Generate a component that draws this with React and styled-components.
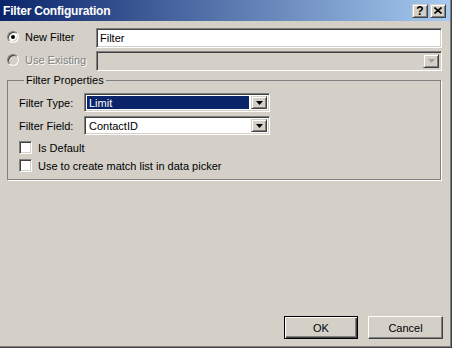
import React from "react";
import styled, { createGlobalStyle, css } from "styled-components";

const GlobalStyle = createGlobalStyle`
    html, body {
        margin: 0;
        padding: 0;
        background: #d4d0c8;
    }
    * {
        box-sizing: border-box;
    }
`;

const sunken = css`
    border: 1px solid;
    border-color: #808080 #ffffff #ffffff #808080;
    box-shadow: inset 1px 1px 0 #404040, inset -1px -1px 0 #d4d0c8;
`;

const raised = css`
    border: 1px solid;
    border-color: #d4d0c8 #404040 #404040 #d4d0c8;
    box-shadow: inset 1px 1px 0 #ffffff, inset -1px -1px 0 #808080;
`;

const Window = styled.div`
    width: 452px;
    height: 348px;
    display: flex;
    flex-direction: column;
    background: #d4d0c8;
    font-family: "Liberation Sans", Arial, sans-serif;
    font-size: 11px;
    color: #000;
    box-shadow: inset -1px -1px 0 #404040, inset -2px -2px 0 #808080;
`;

const TitleBar = styled.div`
    height: 21px;
    margin-right: 2px;
    display: flex;
    align-items: center;
    justify-content: space-between;
    padding: 0 4px 0 3px;
    background: linear-gradient(to right, #0a246a, #a6caf0);
`;

const Title = styled.span`
    color: #fff;
    font-weight: bold;
    font-size: 12px;
    letter-spacing: -0.2px;
`;

const CaptionButtons = styled.div`
    display: flex;
    gap: 2px;
`;

const CaptionButton = styled.div`
    width: 16px;
    height: 14px;
    background: #d4d0c8;
    ${raised};
    display: flex;
    align-items: center;
    justify-content: center;
    font-weight: bold;
    font-size: 12px;
    line-height: 1;
`;

const Body = styled.div`
    flex: 1;
    display: flex;
    flex-direction: column;
    padding: 7px 10px 9px 7px;
`;

const Row = styled.div`
    display: flex;
    align-items: center;
    height: 20px;
    margin-bottom: ${({ $gap }) => $gap || 0}px;
`;

const RadioLabel = styled.label`
    width: 89px;
    display: flex;
    align-items: center;
    gap: 6px;
    color: ${({ $disabled }) => ($disabled ? "#808080" : "#000")};
    text-shadow: ${({ $disabled }) => ($disabled ? "1px 1px 0 #fff" : "none")};
    padding-bottom: 3px;
`;

const Radio = styled.span`
    position: relative;
    width: 12px;
    height: 12px;
    border-radius: 50%;
    border: 1px solid;
    border-color: #808080 #ffffff #ffffff #808080;
    box-shadow: inset 1px 1px 0 #404040, inset -1px -1px 0 #d4d0c8;
    background: ${({ $disabled }) => ($disabled ? "#d4d0c8" : "#fff")};
    flex-shrink: 0;

    ${({ $checked }) =>
        $checked &&
        css`
            &::after {
                content: "";
                position: absolute;
                left: 3px;
                top: 3px;
                width: 4px;
                height: 4px;
                border-radius: 50%;
                background: #000;
            }
        `}
`;

const TextInput = styled.div`
    flex: 1;
    height: 20px;
    background: #fff;
    ${sunken};
    padding: 3px 0 0 3px;
`;

const Combo = styled.div`
    display: flex;
    align-items: stretch;
    height: ${({ $height }) => $height || 19}px;
    width: ${({ $width }) => ($width ? `${$width}px` : "auto")};
    flex: ${({ $width }) => ($width ? "none" : 1)};
    background: ${({ $disabled }) => ($disabled ? "#d4d0c8" : "#fff")};
    ${sunken};
    padding: 2px;
    gap: 2px;
`;

const ComboValue = styled.div`
    flex: 1;
    display: flex;
    align-items: center;
    padding-left: 2px;
    background: ${({ $selected }) => ($selected ? "#0a246a" : "transparent")};
    color: ${({ $selected }) => ($selected ? "#fff" : "#000")};
`;

const DropButton = styled.div`
    width: 16px;
    background: #d4d0c8;
    ${raised};
    display: flex;
    align-items: center;
    justify-content: center;
`;

const Arrow = ({ disabled }) => (
    <svg width="7" height="4" viewBox="0 0 7 4">
        <polygon points="0,0 7,0 3.5,4" fill={disabled ? "#a0a0a0" : "#000"} />
    </svg>
);

const Group = styled.fieldset`
    margin: 3px 1px 0 0;
    padding: 6px 8px 7px 10px;
    border: 1px solid #808080;
    box-shadow: 1px 1px 0 #fff;
    display: flex;
    flex-direction: column;
`;

const Legend = styled.legend`
    margin-left: 6px;
    padding: 0 2px 0 2px;
    line-height: 13px;
`;

const FieldRow = styled.div`
    display: flex;
    align-items: center;
    margin-bottom: 4px;
`;

const FieldLabel = styled.span`
    width: 66px;
    padding-left: 1px;
`;

const CheckRow = styled.label`
    display: flex;
    align-items: center;
    gap: 6px;
    height: 13px;
    margin-top: ${({ $top }) => $top}px;
    padding-left: 1px;
`;

const Checkbox = styled.span`
    width: 13px;
    height: 13px;
    background: #fff;
    ${sunken};
`;

const Footer = styled.div`
    margin-top: auto;
    margin-right: -1px;
    display: flex;
    justify-content: flex-end;
    gap: 10px;
`;

const Button = styled.button`
    width: ${({ $default }) => ($default ? 74 : 75)}px;
    height: 23px;
    font-family: inherit;
    font-size: 11px;
    color: #000;
    background: #d4d0c8;
    padding: 0;
    border: 1px solid;
    border-color: #fff #404040 #404040 #fff;
    box-shadow: inset -1px -1px 0 #808080;

    ${({ $default }) =>
        $default &&
        css`
            border: 1px solid #000;
            box-shadow: inset 1px 1px 0 #fff, inset -1px -1px 0 #404040,
                inset -2px -2px 0 #808080;
        `}
`;

const App = () => {
    return (
        <>
            <GlobalStyle />
            <Window>
                <TitleBar>
                    <Title>Filter Configuration</Title>
                    <CaptionButtons>
                        <CaptionButton>?</CaptionButton>
                        <CaptionButton>
                            <svg width="8" height="7" viewBox="0 0 8 7">
                                <path d="M0.5 0.5 L7.5 6.5 M7.5 0.5 L0.5 6.5" stroke="#000" strokeWidth="1.6" />
                            </svg>
                        </CaptionButton>
                    </CaptionButtons>
                </TitleBar>

                <Body>
                    <Row $gap={3}>
                        <RadioLabel>
                            <Radio $checked />
                            New Filter
                        </RadioLabel>
                        <TextInput>Filter</TextInput>
                    </Row>
                    <Row>
                        <RadioLabel $disabled>
                            <Radio $disabled />
                            Use Existing
                        </RadioLabel>
                        <Combo $disabled $height={20}>
                            <ComboValue />
                            <DropButton>
                                <Arrow disabled />
                            </DropButton>
                        </Combo>
                    </Row>

                    <Group>
                        <Legend>Filter Properties</Legend>
                        <FieldRow>
                            <FieldLabel>Filter Type:</FieldLabel>
                            <Combo $width={186}>
                                <ComboValue $selected>Limit</ComboValue>
                                <DropButton>
                                    <Arrow />
                                </DropButton>
                            </Combo>
                        </FieldRow>
                        <FieldRow>
                            <FieldLabel>Filter Field:</FieldLabel>
                            <Combo $width={186}>
                                <ComboValue>ContactID</ComboValue>
                                <DropButton>
                                    <Arrow />
                                </DropButton>
                            </Combo>
                        </FieldRow>
                        <CheckRow $top={2}>
                            <Checkbox />
                            Is Default
                        </CheckRow>
                        <CheckRow $top={5}>
                            <Checkbox />
                            Use to create match list in data picker
                        </CheckRow>
                    </Group>

                    <Footer>
                        <Button $default>OK</Button>
                        <Button>Cancel</Button>
                    </Footer>
                </Body>
            </Window>
        </>
    );
};

export default App;
